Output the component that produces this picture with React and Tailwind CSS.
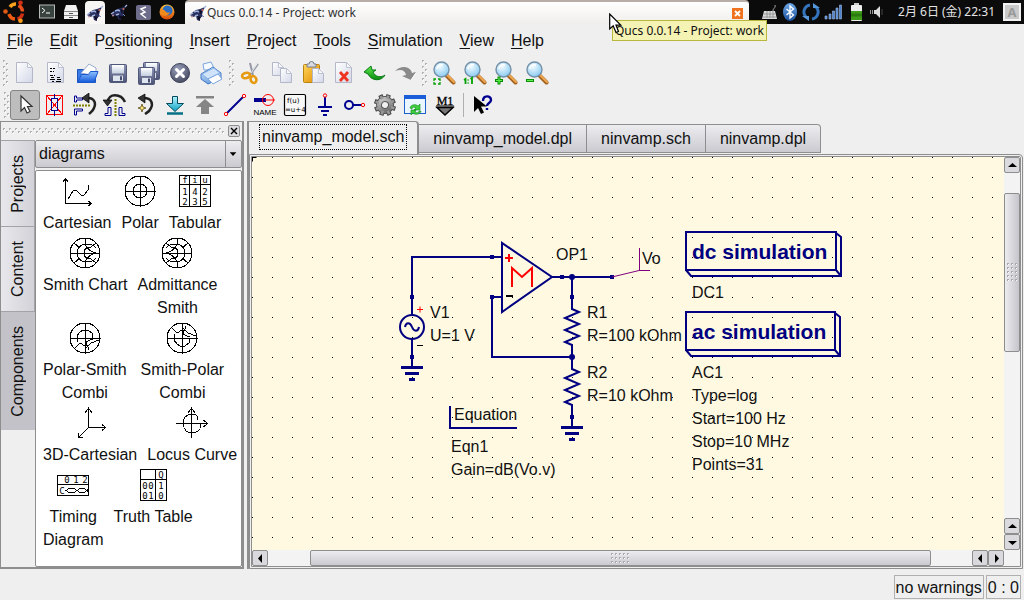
import React from "react";

/* ---------- shared gradients ---------- */
function Defs() {
  const g = (id, a, b, dir) => (
    <linearGradient id={id} x1="0" y1="0" x2={dir === "v" ? "0" : "1"} y2="1">
      <stop offset="0" stopColor={a} />
      <stop offset="1" stopColor={b} />
    </linearGradient>
  );
  return (
    <svg width="0" height="0" className="absolute" aria-hidden="true">
      <defs>
        {g("paper", "#ffffff", "#d3d8e8")}
        {g("folder", "#8fc4ff", "#1257d8", "v")}
        {g("disk", "#8c93b4", "#4d5374", "v")}
        {g("label", "#ffffff", "#c4cfdf", "v")}
        {g("gold", "#ffd65a", "#e08a00")}
        {g("teal", "#b6f4ff", "#0aa2c2", "v")}
        {g("green", "#5dec4a", "#0b8a12", "v")}
        {g("printer", "#e8f3ff", "#6da0e0", "v")}
        {g("metal", "#d6d6d6", "#5c5c5c")}
        {g("bt", "#6fa9e8", "#1a4f9c", "v")}
        {g("fox", "#ffc63a", "#d84a05", "v")}
        <radialGradient id="lens" cx="0.4" cy="0.3" r="0.8">
          <stop offset="0" stopColor="#f4fcff" />
          <stop offset="1" stopColor="#7cc4f0" />
        </radialGradient>
        <radialGradient id="stop" cx="0.4" cy="0.3" r="0.8">
          <stop offset="0" stopColor="#9aa0bb" />
          <stop offset="1" stopColor="#3d4258" />
        </radialGradient>
      </defs>
    </svg>
  );
}

function Icon({ children, size = 24, crisp }) {
  return (
    <svg
      width={size}
      height={size}
      viewBox="0 0 24 24"
      fill="none"
      aria-hidden="true"
      shapeRendering={crisp ? "crispEdges" : "auto"}
      className="shrink-0"
    >
      {children}
    </svg>
  );
}

/* ---------- toolbar icons ---------- */
const Page = ({ x = 3, y = 1, w = 17, h = 21 }) => (
  <g>
    <path
      d={`M${x + 0.5} ${y + 0.5}h${w - 6}l5 5v${h - 6}h-${w - 1}z`}
      fill="url(#paper)"
      stroke="#b3b7c8"
    />
    <path d={`M${x + w - 5.5} ${y + 0.5}v5h5z`} fill="#f8f9fc" stroke="#bfc3d1" />
  </g>
);
const NewDoc = () => <Icon><Page /></Icon>;
const TextDoc = () => (
  <Icon>
    <Page />
    <path d="M6 7.500h2m1 0h2M6 10.500h2m1 0h1M6 14.500h3m1 0h1M7 16.500h3m3 0h3M6 18.500h5m2 0h4M8 20.500h2m2 0h5" stroke="#000" shapeRendering="crispEdges" />
  </Icon>
);
const Open = () => (
  <Icon>
    <path d="M2.500 8.500h6l2 2h10v11h-18z" fill="#3b7be6" stroke="#1d54b8" />
    <path d="M6 12l8-9 7 4v8z" fill="#fff" stroke="#98aacb" />
    <path d="M2.500 21.500l4-8h7l2-3h7.500l-4 11z" fill="url(#folder)" stroke="#1a58cc" />
  </Icon>
);
const Disk = ({ x = 3, y = 3, s = 17 }) => (
  <g>
    <rect x={x + 0.5} y={y + 0.5} width={s} height={s + 1} rx="1" fill="url(#disk)" stroke="#50587a" />
    <rect x={x + 3} y={y + 1} width={s - 5} height={s * 0.5} fill="url(#label)" />
    <rect x={x + 4} y={y + s * 0.68} width={s - 7} height={s * 0.32} fill="#dfe5ef" />
    <rect x={x + s - 6} y={y + s * 0.72} width="2" height="4" fill="#474d6e" />
  </g>
);
const Save = () => <Icon><Disk /></Icon>;
const SaveAll = () => <Icon><Disk x={6} y={1} s={16} /><Disk x={1} y={6} s={16} /></Icon>;
const Close = () => (
  <Icon>
    <circle cx="12" cy="12" r="9.500" fill="url(#stop)" stroke="#3c4258" />
    <path d="M8.500 8.500l7 7m0-7l-7 7" stroke="#fff" strokeWidth="3" strokeLinecap="round" />
  </Icon>
);
const Print = () => (
  <Icon>
    <path d="M5 9L4 3l8-2 4 8z" fill="#f4faff" stroke="#7ba6df" />
    <path d="M2 13l12-7 8 6v5l-13 6-7-5z" fill="url(#printer)" stroke="#4379c4" />
    <path d="M3 13l12-6 6 5-12 6z" fill="#cfe3fa" stroke="#6c9fde" strokeWidth=".7" />
    <path d="M9 18l10-5 4 5-9 5z" fill="#fff" stroke="#7ba6df" />
  </Icon>
);
const Cut = () => (
  <Icon>
    <path d="M11 14L19 3M14 14L11 2" stroke="#9598a8" strokeWidth="2" />
    <path d="M12 12l6-9" stroke="#fff" strokeWidth=".8" />
    <ellipse cx="7" cy="14.500" rx="4" ry="2.600" stroke="#e59a10" strokeWidth="2.600" transform="rotate(-15 7 14.500)" />
    <ellipse cx="14.500" cy="18.500" rx="2.800" ry="3.500" stroke="#e59a10" strokeWidth="2.600" transform="rotate(-20 14.500 18.500)" />
  </Icon>
);
const Copy = () => <Icon><Page x={2} y={1} w={12} h={14} /><Page x={10} y={7} w={12} h={15} /></Icon>;
const Paste = () => (
  <Icon>
    <rect x="2.500" y="3.500" width="16" height="18" rx="1" fill="url(#gold)" stroke="#b98310" />
    <path d="M6 6V3h2a2.500 2.500 0 015 0h2v3z" fill="#d9dbe2" stroke="#777c8c" />
    <Page x={11} y={7} w={12} h={15} />
  </Icon>
);
const Delete = () => (
  <Icon>
    <Page />
    <path d="M8 11l8 9m0-9l-8 9" stroke="#f03320" strokeWidth="2.800" />
  </Icon>
);
const Undo = () => (
  <Icon>
    <path d="M1 11l7-6 1 4h4l-3 2c2 5 8 6 12 3-3 6-13 7-17-1z" fill="url(#green)" stroke="#087b15" />
  </Icon>
);
const Redo = () => (
  <Icon>
    <path d="M1 10c6-6 15-5 17 2l4-1-5 8-9-4 4-1c-1-5-5-6-11-4z" fill="#8a8a8a" />
    <path d="M17 19l5-7" stroke="#fff" />
  </Icon>
);
const Lens = ({ children }) => (
  <Icon>
    <path d="M14.500 14.500l7 7" stroke="#a36421" strokeWidth="4" strokeLinecap="round" />
    <path d="M15 14l7 7" stroke="#f0a850" strokeWidth="2" strokeLinecap="round" />
    <circle cx="9.500" cy="8.500" r="7.500" fill="url(#lens)" stroke="#7390a8" strokeWidth="1.400" />
    <path d="M5 8c0-3 3-5 6-4" stroke="#fff" strokeWidth="1.500" />
    {children}
  </Icon>
);
const ZoomFit = () => <Lens><path d="M2 20v-2h2m2 0h2v2m0 1v2H6m-2 0H2v-2" stroke="#00a000" strokeWidth="1.300" /></Lens>;
const ZoomOne = () => <Lens><path d="M1 19l1.500-1v5m5-5L9 17v6M5.200 18.500v1m0 2v1" stroke="#00a000" strokeWidth="1.800" /></Lens>;
const ZoomIn = () => <Lens><path d="M1 19.500h8m-4-4v8" stroke="#058a05" strokeWidth="3" /><path d="M2 19.500h6m-3-3v6" stroke="#5ff04a" strokeWidth="1.200" /></Lens>;
const ZoomOut = () => <Lens><path d="M1 19.500h8" stroke="#058a05" strokeWidth="3" /><path d="M2 19.500h6" stroke="#5ff04a" strokeWidth="1.200" /></Lens>;

const Arrow = () => (
  <Icon>
    <path d="M8 3v15l3.500-3.500L14 20l3-1.500-2.500-5H19z" fill="#fff" stroke="#333" strokeWidth="1.200" />
  </Icon>
);
const Deactivate = () => (
  <Icon crisp>
    <path d="M3.500 2.500h16v19h-16zM3.500 2.500l16 19m0-19l-16 19" stroke="#f00" />
    <path d="M11.500 1v5m0 12v5M8.500 5.500h6v12h-6z" stroke="#000090" />
  </Icon>
);
const MirrorX = () => (
  <Icon>
    <path d="M1.500 3v6h2V7h6V5h-6V3zM1.500 22v-6h8v2h-6v4z" stroke="#000090" />
    <path d="M0 12.500h18" stroke="#808000" strokeWidth="2" strokeDasharray="2 1" />
    <path d="M15 5c7 0 8 6 6 10-1 3-3 4-5 6" stroke="#222" strokeWidth="2.500" />
    <path d="M9 5l7-5v10z" fill="#333" stroke="#000" strokeWidth=".7" />
  </Icon>
);
const MirrorY = () => (
  <Icon>
    <path d="M2 22.500v-2h3v-6h3v8zM22 22.500v-2h-3v-6h-3v8z" stroke="#000090" />
    <path d="M12.500 6v18" stroke="#808000" strokeWidth="2" strokeDasharray="2 1" />
    <path d="M5 9c0-9 13-9 17 0" stroke="#222" strokeWidth="2.500" />
    <path d="M0 7h9l-4.500 6z" fill="#333" stroke="#000" strokeWidth=".7" />
  </Icon>
);
const Rotate = () => (
  <Icon>
    <path d="M11 5c8 0 9 6 7 10-1 3-3 4-6 6" stroke="#222" strokeWidth="2.500" />
    <path d="M5 5l7-4v9z" fill="#333" stroke="#000" strokeWidth=".7" />
    <path d="M9 11l1 3 3 1-3 1-1 3-1-3-3-1 3-1z" fill="#ffe680" stroke="#4a3b00" strokeWidth=".7" />
  </Icon>
);
const Into = () => (
  <Icon>
    <path d="M9.500 3.500h5v7h6l-8.500 8-8.500-8h6z" fill="url(#teal)" stroke="#034b5c" />
    <path d="M4 20.500h16" stroke="#067186" strokeWidth="2.500" />
  </Icon>
);
const PopOut = () => <Icon><path d="M3 3h18v2.500H3zM12 6l9 8h-5v7H8v-7H3z" fill="#858585" /></Icon>;
const Wire = () => (
  <Icon>
    <path d="M4 20L20 4" stroke="#000090" strokeWidth="2" />
    <circle cx="3" cy="21" r="1.700" stroke="red" /><circle cx="21" cy="3" r="1.700" stroke="red" />
  </Icon>
);
const WireLabel = () => (
  <Icon>
    <path d="M1 7h12" stroke="#000090" strokeWidth="4" /><path d="M12 7h10" stroke="red" />
    <circle cx="15" cy="7" r="5.500" stroke="red" />
    <text x="12" y="21.500" textAnchor="middle" fill="#000" className="font-['Liberation_Sans',sans-serif] text-[8px]">NAME</text>
  </Icon>
);
const Equation = () => (
  <Icon>
    <rect x="1.500" y="1.500" width="21" height="21" rx="1.500" fill="#f8f8f8" stroke="#000" strokeWidth="1.200" />
    <text x="4" y="10" fill="#000" className="font-['DejaVu_Sans',sans-serif] text-[7px]">f(u)</text>
    <text x="2" y="19" fill="#000" className="font-['DejaVu_Sans',sans-serif] text-[7px]">=u+4</text>
  </Icon>
);
const Ground = () => (
  <Icon>
    <path d="M12 4v10M5 14h14M8 18h8M10 22h4" stroke="#000090" strokeWidth="2" /><circle cx="12" cy="2.500" r="1.700" stroke="red" />
  </Icon>
);
const Port = () => (
  <Icon>
    <circle cx="6" cy="12" r="4" stroke="#000090" strokeWidth="2" /><path d="M10 12h8" stroke="#000090" strokeWidth="2" /><circle cx="20" cy="12" r="1.700" stroke="red" />
  </Icon>
);
const Gear = () => (
  <Icon>
    <g transform="rotate(20 12 12)">
      <path d="M12 1v22M1 12h22M4.200 4.200l15.600 15.600M19.800 4.200L4.200 19.800" stroke="#4c4c4c" strokeWidth="4.500" />
      <circle cx="12" cy="12" r="8.500" fill="url(#metal)" stroke="#555" />
      <path d="M12 2v20M2 12h20M5 5l14 14M19 5L5 19" stroke="#9a9a9a" strokeWidth="2.500" />
      <circle cx="12" cy="12" r="6.500" fill="url(#metal)" />
      <circle cx="12" cy="12" r="3.500" fill="#efefef" stroke="#555" />
    </g>
  </Icon>
);
const ViewData = () => (
  <Icon>
    <rect x="1.500" y="2.500" width="21" height="18" fill="#e9f6ff" stroke="#1c62cf" /><path d="M1 4h22" stroke="#1a5fd8" strokeWidth="4" />
    <path d="M7 15c1-4 6-4 8-2l2-2v6h-6l2-2c-2-1-4-1-4 1zM18 18c-1 4-6 4-8 2l-2 2v-5h5l-1 2c2 1 4 1 4-1z" fill="#3fd03f" stroke="#0b8516" strokeWidth=".6" />
  </Icon>
);
const Marker = () => (
  <Icon>
    <text x="12" y="12" textAnchor="middle" fill="#000" stroke="#000" strokeWidth=".3" className="font-['Liberation_Serif',serif] text-[12px]">M1</text>
    <path d="M3 13h18" stroke="#000" /><path d="M4 14.500h16l-8 7.500z" fill="#777" stroke="#000" strokeWidth="1.500" />
  </Icon>
);
const WhatsThis = () => (
  <Icon>
    <path d="M4 3v16l4-4 3 6 3-1.500-3-6h6z" fill="#000" />
    <path d="M13 8c0-6 8-6 8-1 0 3-4 3-4 6m0 2v2" stroke="#000090" strokeWidth="2.400" />
  </Icon>
);

/* ---------- diagram icons, 32 px ---------- */
const D = ({ children }) => (
  <svg width="32" height="32" viewBox="0 0 32 32" fill="none" stroke="#000" shapeRendering="crispEdges" aria-hidden="true">{children}</svg>
);
const tiny = "font-['DejaVu_Sans_Mono',monospace] text-[9px]";
const Glyphs = ({ items }) => items.map(([t, x, y]) => (
  <text key={`${x}-${y}`} x={x} y={y} textAnchor="middle" fill="#000" stroke="none" className={tiny}>{t}</text>
));
const Cartesian = () => <D><path d="M4.500 29V3.500M2 7l2.500-3.500L7 7M4 28.500h26M27 26l3.500 2.500L27 31M7 24l5-8 3-1 5 5 3 0 4-5 1-5" /></D>;
const cross = "M16 .5v31M.5 16h31";
const Polar = () => <D><circle cx="16" cy="16" r="15" /><circle cx="16" cy="16" r="7" /><path d={cross} /></D>;
const Tabular = () => (
  <D><path d="M.5.500h31v31H.5zM.5 9.500h31M10.500.500v31M21.500.500v31" />
    <Glyphs items={[["f", 6, 8], ["i", 16, 8], ["u", 26, 8], ["1", 6, 20], ["4", 16, 20], ["2", 26, 20], ["2", 6, 30], ["3", 16, 30], ["5", 26, 30]]} /></D>
);
const smith = (
  <g>
    <circle cx="16" cy="16" r="15" />
    <path d="M1 16h30M27 16c-5-1-10-5-11-9V1M27 16c-5 1-10 5-11 9v6M5 6l6 5M5 26l6-5M27 6l-5 4M27 26l-5-4" />
    <path d="M8 16c0-5 4-9 9-9s8 1 10 4M8 16c0 5 4 9 9 9s8-1 10-4M15 16c0-4 2-6 7-6M15 16c0 4 2 6 7 6" />
  </g>
);
const Smith = () => <D>{smith}</D>;
const Admittance = () => <D><g transform="matrix(-1 0 0 1 32 0)">{smith}</g></D>;
const PolarSmith = () => (
  <D><circle cx="16" cy="16" r="15" /><path d={cross} />
    <path d="M8 20v-6l3-4 3-2h5l4 3 1 5M5 27l6-6 5 3 4-1M16 20l8-3M20 28l-3-8M30 18l-8 3-5 5" /></D>
);
const SmithPolar = () => (
  <D><circle cx="16" cy="16" r="15" /><path d={cross} />
    <path d="M8 12v6l3 4 3 2h5l4-3 1-5M5 5l6 6 5-3 4 1M16 12l8 3M20 4l-3 8M30 14l-8-3-5-5" /></D>
);
const Cart3d = () => <D><path d="M14.500 20V1.500M11 6l3.500-5L18 6M14 20.500h18M28 17.500l3.500 3-3.500 3M14.500 20.500l-10 10M4.500 26v4.500H9" /></D>;
const Locus = () => <D><path d="M15.500 31V1M12 6l3.500-5L19 6M0 16.500h32M27 13l5 3.500-5 3.500" /><path d="M21 13c2-6-4-7-9-5-8 3-6 18 4 18 6 0 9-4 9-9" /></D>;
const Timing = () => (
  <D><path d="M.5 6.500h31v20H.5zM.5 15.500h31M9 21.500l3-2h5l3 2-3 2h-5zM20 21.500l3-2h4l3 2-3 2h-4zM32 19l-2 2.500 2 2.500" />
    <Glyphs items={[["0", 10, 14], ["1", 19, 14], ["2", 28, 14], ["C", 5, 25]]} /></D>
);
const Truth = () => (
  <D><path d="M3.500.500h26v31h-26zM3.500 10.500h26M18.500.500v31" />
    <Glyphs items={[["Q", 24, 9], ["0", 8, 20], ["0", 14, 20], ["1", 24, 20], ["0", 8, 30], ["1", 14, 30], ["0", 24, 30]]} /></D>
);

const diagramRows = [
  { gap: "gap-[10px]", items: [[Cartesian, ["Cartesian"]], [Polar, ["Polar"]], [Tabular, ["Tabular"]]] },
  { gap: "gap-[10px]", items: [[Smith, ["Smith Chart"]], [Admittance, ["Admittance", "Smith"]]] },
  { gap: "gap-[14px]", items: [[PolarSmith, ["Polar-Smith", "Combi"]], [SmithPolar, ["Smith-Polar", "Combi"]]] },
  { gap: "gap-[10px]", items: [[Cart3d, ["3D-Cartesian"]], [Locus, ["Locus Curve"]]] },
  { gap: "gap-[10px]", items: [[Timing, ["Timing", "Diagram"]], [Truth, ["Truth Table"]]] },
];

/* ---------- desktop panel ---------- */
const QucsLogo = () => (
  <svg width="18" height="18" viewBox="0 0 18 18" className="shrink-0" aria-hidden="true">
    <path d="M1 11l3-3 3-2 4-1 5-2-2 4-1 4 1 1-3 2v3l-3-1-1-4-3 1z" fill="#2a3160" />
    <path d="M1 11l3-2M5 8l3-1 2 1M6 12l3-1M15 4l2-2" stroke="#9fb2dc" strokeWidth="1.400" fill="none" />
    <path d="M10 6l3 1-1 4zM8 12l2 5 2-4z" fill="#0c0d24" />
    <circle cx="13.500" cy="6" r="1" fill="#d06a5a" /><circle cx="3" cy="12.500" r="1" fill="#b98fa0" />
    <path d="M13 11l2 2" stroke="#7f8bb8" />
  </svg>
);

function Panel() {
  const launcher = "grid w-6 place-items-center";
  return (
    <header className="relative flex h-6 shrink-0 items-center bg-[#0b0b0b] font-['Noto_Sans','Noto_Sans_CJK_JP',sans-serif] text-[11px] leading-4">
      <button aria-label="Main menu" className="grid w-[27px] place-items-center">
        <svg width="24" height="24" viewBox="0 0 24 24" fill="none" aria-hidden="true">
          <path d="M8 7a7 7 0 016-3" stroke="#f7a11a" strokeWidth="3.500" />
          <path d="M16.500 5.500a7 7 0 014 6" stroke="#e8501c" strokeWidth="3.500" />
          <path d="M20.500 13.500a7 7 0 01-5 5.500" stroke="#d33116" strokeWidth="3.500" />
          <path d="M13 19a7 7 0 01-6-5" stroke="#ee5a10" strokeWidth="3.500" />
          <circle cx="3.500" cy="11.500" r="2.300" fill="#e05a14" /><circle cx="18.500" cy="2.800" r="2.300" fill="#d33116" /><circle cx="18.500" cy="20.800" r="2.300" fill="#f59a18" />
        </svg>
      </button>
      <div className="ml-2 flex h-full items-stretch">
        <button aria-label="Terminal" className={launcher}>
          <svg width="16" height="16" viewBox="0 0 16 16" aria-hidden="true"><rect x=".5" y="1" width="15" height="13" fill="#38423e" stroke="#b8bcb8" /><path d="M3 4l3 2.500L3 9m4 0h4" stroke="#fff" fill="none" /></svg>
        </button>
        <button aria-label="Files" className={launcher}>
          <svg width="16" height="16" viewBox="0 0 16 16" aria-hidden="true"><path d="M3 1h10l2 6v8H1V7z" fill="#f2f2f2" /><path d="M1 7.500h14M1 11.500h14" stroke="#888" /><path d="M6 9.500h4M6 13.500h4" stroke="#555" /></svg>
        </button>
        <button aria-label="Qucs" className="mt-px ml-[2px] grid w-5 place-items-center rounded-t bg-[#f7f6f4]"><QucsLogo /></button>
        <button aria-label="Qucs second window" className="grid w-7 place-items-center"><QucsLogo /></button>
        <button aria-label="Editor" className="grid w-5 place-items-center">
          <svg width="15" height="15" viewBox="0 0 15 15" aria-hidden="true"><rect width="15" height="15" rx="2" fill="#6d6c8a" /><path d="M10 2L5 4l4 3-4 2 5 4" stroke="#fff" strokeWidth="1.500" fill="none" /></svg>
        </button>
        <button aria-label="Firefox" className="grid w-7 place-items-center">
          <svg width="16" height="16" viewBox="0 0 16 16" aria-hidden="true"><circle cx="8" cy="8" r="7.500" fill="url(#fox)" /><circle cx="8.500" cy="6.500" r="5" fill="#2b6cc4" /><path d="M1 5c3 0 5 1 6 3 1 1 3 1 4 0-1 4-6 5-10 2z" fill="#f08a1c" /></svg>
        </button>
      </div>
      <div className="ml-[4px] flex h-6 min-w-0 flex-1 items-center justify-between rounded-t border-t-2 border-[#b9aea7] bg-linear-to-b from-white to-[#efeeec] pr-[6px] pl-1 text-[#333]">
        <span className="flex items-center"><QucsLogo /><span className="truncate text-[12px]">Qucs 0.0.14 - Project: work</span></span>
        <button aria-label="Close window" className="grid size-[11px] place-items-center bg-[#f0721e]">
          <svg width="9" height="9" viewBox="0 0 9 9" aria-hidden="true"><path d="M2 2l5 5m0-5L2 7" stroke="#fff" strokeWidth="1.800" /></svg>
        </button>
      </div>
      <div className="flex shrink-0 items-center gap-1 pr-[3px] pl-3 text-[#e4e4e4]">
        <svg width="17" height="16" viewBox="0 0 17 16" aria-hidden="true"><path d="M3 7h11l2 8H1z" fill="#d9d9d9" /><path d="M3 10h11M2 13h13M6 7v7m3-7v7m3-7v7" stroke="#888" strokeWidth=".8" /><path d="M12 7c0-4 3-2 2-6" stroke="#aaa" fill="none" /></svg>
        <svg width="16" height="20" viewBox="0 0 16 20" aria-hidden="true"><ellipse cx="8" cy="10" rx="7" ry="9" fill="url(#bt)" /><path d="M4.500 7l7 6L8 16V4l3.500 3-7 6" stroke="#fff" strokeWidth="1.300" fill="none" /></svg>
        <svg width="18" height="18" viewBox="0 0 18 18" fill="none" aria-hidden="true"><path d="M8 2c-6 1-8 8-4 12M10 16c6-1 8-8 4-12" stroke="#3474bd" strokeWidth="3" /><path d="M0 13h7v5zM18 5h-7V0z" fill="#5595d8" /></svg>
        <svg width="18" height="16" viewBox="0 0 18 16" fill="#4d83cf" stroke="#9dbce8" strokeWidth=".6" aria-hidden="true"><path d="M1 12h2v3H1zM5 10h2v5H5zM8.500 7h2v8h-2zM12 4h2v11h-2zM15.500 1h2v14h-2z" /></svg>
        <svg width="20" height="20" viewBox="0 0 20 20" aria-hidden="true"><rect x="8" y="1" width="5" height="3" fill="#ccc" /><rect x="5" y="3" width="11" height="16" rx="1" fill="#eee" /><rect x="5" y="9" width="11" height="9" fill="#3f9c1a" /><path d="M5 13h11" stroke="#2c7d10" strokeWidth="3" /></svg>
        <svg width="18" height="16" viewBox="0 0 18 16" aria-hidden="true"><path d="M4 6h2l4-4v12l-4-4H4z" fill="#ddd" /><path d="M0.500 6v4m2-4v4" stroke="#999" /><path d="M12 5v6" stroke="#444" /></svg>
        <time className="ml-[6px] text-[12px] whitespace-nowrap">2月 6日 (金) 22:31</time>
        <button aria-label="Input method" className="ml-1 grid size-[18px] place-items-center border-2 border-[#f2f2f2] bg-[#c9c9c9] text-[13px] leading-3 font-bold text-[#999]">A</button>
      </div>
    </header>
  );
}

/* ---------- menu and toolbars ---------- */
const menus = [["", "F", "ile"], ["", "E", "dit"], ["P", "o", "sitioning"], ["", "I", "nsert"], ["", "P", "roject"], ["", "T", "ools"], ["", "S", "imulation"], ["", "V", "iew"], ["", "H", "elp"]];

const Grip = () => (
  <svg width="6" height="26" className="shrink-0" aria-hidden="true">
    <defs>
      <pattern id="grip" width="6" height="6" patternUnits="userSpaceOnUse">
        <path d="M0 0h2v1h-1v1h-1zM3 3h2v1h-1v1h-1z" fill="#b0b0b0" /><path d="M2 1v2h-1v-1zM5 4v2h-1v-1z" fill="#fff" />
      </pattern>
    </defs>
    <rect width="6" height="26" fill="url(#grip)" />
  </svg>
);
const fileTools = [["New", NewDoc], ["New text", TextDoc], ["Open", Open], ["Save", Save], ["Save all", SaveAll], ["Close", Close], ["Print", Print]];
const editTools = [["Cut", Cut], ["Copy", Copy], ["Paste", Paste], ["Delete", Delete], ["Undo", Undo], ["Redo", Redo]];
const viewTools = [["View all", ZoomFit], ["View 1:1", ZoomOne], ["Zoom in", ZoomIn], ["Zoom out", ZoomOut]];
const workTools = [["Select", Arrow], ["Deactivate", Deactivate], ["Mirror about X axis", MirrorX], ["Mirror about Y axis", MirrorY], ["Rotate", Rotate], ["Go into subcircuit", Into], ["Pop out", PopOut], ["Wire", Wire], ["Wire label", WireLabel], ["Insert equation", Equation], ["Ground", Ground], ["Port", Port], ["Simulate", Gear], ["View data display", ViewData], ["Set marker", Marker]];

const Tools = ({ items, wide }) => (
  <div className="flex">
    {items.map(([name, I]) => (
      <button
        key={name}
        aria-label={name}
        title={name}
        className={`grid h-[30px] place-items-center ${wide ? "w-[31px]" : "w-[30px]"} ${name === "Select" ? "rounded-[3px] border border-[#858585] bg-[#bdbdbd]" : ""}`}
      >
        <I />
      </button>
    ))}
  </div>
);

/* ---------- component dock ---------- */
const raised = "bg-linear-to-b from-[#ededf0] to-[#cacad0]";

function Dock() {
  const side = [["Projects", "h-[86px]"], ["Content", "h-[85px]"], ["Components", "h-[119px]"]];
  return (
    <aside className="flex w-[244px] shrink-0 flex-col border border-r-2 border-b-2 border-[#8e8e8e]">
      <div className="flex h-[18px] shrink-0 items-center gap-1 px-[2px]">
        <svg height="6" className="min-w-0 flex-1" aria-hidden="true">
          <defs>
            <pattern id="gripH" width="6" height="6" patternUnits="userSpaceOnUse"><path d="M0 0h2v1h-1v1h-1zM3 3h2v1h-1v1h-1z" fill="#b0b0b0" /><path d="M2 1v2h-1v-1zM5 4v2h-1v-1z" fill="#fff" /></pattern>
          </defs>
          <rect width="100%" height="6" fill="url(#gripH)" />
        </svg>
        <button aria-label="Close dock" className="grid size-3 place-items-center rounded-[2px] border border-[#8e8e8e] bg-[#dcdce0]">
          <svg width="8" height="8" viewBox="0 0 8 8" aria-hidden="true"><path d="M1 1l6 6m0-6L1 7" stroke="#000" strokeWidth="1.400" /></svg>
        </button>
      </div>
      <div className="flex min-h-0 flex-1">
        <div role="tablist" aria-orientation="vertical" className="flex w-[34px] shrink-0 flex-col">
          {side.map(([name, h], i) => (
            <button key={name} role="tab" aria-selected={i === 2} className={`grid place-items-center border-t border-[#a4a4a8] ${h} ${i === 2 ? "bg-[#c2c2c8]" : "border-r bg-linear-to-r from-[#e8e8ec] to-[#d2d2d8]"}`}>
              <span className="rotate-180 leading-5 [writing-mode:vertical-rl]">{name}</span>
            </button>
          ))}
        </div>
        <div className="flex min-w-0 flex-1 flex-col gap-[2px]">
          <div className={`flex h-7 shrink-0 rounded-[2px] border border-[#8e8e8e] ${raised}`}>
            <select aria-label="Component category" className="min-w-0 flex-1 appearance-none bg-transparent pl-[3px] outline-none" defaultValue="diagrams">
              <option>diagrams</option>
            </select>
            <svg width="16" height="26" viewBox="0 0 16 26" className="pointer-events-none shrink-0 border-l border-[#8e8e8e]" aria-hidden="true"><path d="M4 11h7l-3.500 4z" fill="#000" /></svg>
          </div>
          <div className="min-h-0 flex-1 overflow-hidden rounded-[2px] border border-[#8e8e8e] bg-white pt-1 pl-[7px]">
            {diagramRows.map((row, r) => (
              <div key={r} className={`flex items-start ${row.gap}`}>
                {row.items.map(([I, lines]) => (
                  <button key={lines[0]} className="flex flex-col items-center pb-[3px] leading-[23px] whitespace-nowrap">
                    <span className="mb-1 block h-8"><I /></span>
                    {lines.map((l) => <span key={l}>{l}</span>)}
                  </button>
                ))}
              </div>
            ))}
          </div>
        </div>
      </div>
    </aside>
  );
}

/* ---------- schematic ---------- */
const Resistor = ({ y }) => <path d={`M572 ${y}v12l7 3-14 6 14 6-14 6 14 6-14 6 7 3v12`} />;
const Earth = ({ x, y }) => (
  <g strokeWidth="3"><path d={`M${x - 11} ${y + 0.5}h22M${x - 7} ${y + 6.5}h14M${x - 3} ${y + 12.5}h6`} /></g>
);
const SimBox = ({ y, w, label }) => (
  <g>
    <path d={`M686 ${y}h${w}v38h-${w}zM${686 + w} ${y + 1}l5 4v39h-${w}l-5-6M${686 + w} ${y + 38}l5 6`} />
    <text x="692" y={y + 27} fill="#000080" stroke="none" className="text-[21px] font-bold">{label}</text>
  </g>
);
const labels = [
  ["OP1", 556, 260], ["Vo", 642, 264], ["V1", 430, 318], ["U=1 V", 430, 341], ["R1", 587, 318], ["R=100 kOhm", 587, 341],
  ["R2", 587, 378], ["R=10 kOhm", 587, 401], ["Equation", 454, 420], ["Eqn1", 451, 452], ["Gain=dB(Vo.v)", 451, 475],
  ["DC1", 692, 298], ["AC1", 692, 378], ["Type=log", 692, 401], ["Start=100 Hz", 692, 424], ["Stop=10 MHz", 692, 447], ["Points=31", 692, 470],
];
const nodes = [[492, 257], [412, 297], [562, 277], [612, 277], [572, 297], [492, 297], [412, 357], [572, 417]];

function Schematic() {
  return (
    <svg width="100%" height="100%" className="block bg-[#fff9e1]" role="img" aria-label="Non-inverting amplifier schematic">
      <defs>
        <pattern id="dots" width="20" height="20" patternUnits="userSpaceOnUse"><rect width="1" height="1" fill="#000" /></pattern>
      </defs>
      <rect width="100%" height="100%" fill="url(#dots)" />
      <path d="M.5 4.500v-4h4" stroke="#000" fill="none" />
      <g transform="translate(-252 -157)" fill="none" stroke="#000080" strokeWidth="2">
        <path d="M412 315v-58h90M502 297h-10v60h80M552 277h60M572 277v20M412 339v28M572 417v10" />
        <path d="M502 243v69l50-35z" />
        <Resistor y={297} /><Resistor y={357} />
        <Earth x={412} y={367} /><Earth x={572} y={427} />
        <circle cx="412" cy="327" r="12" />
        <path d="M405 327c1-5 5-5 7 0s6 5 7 0" />
        <path d="M450 406v22h67" />
        <g fill="#000080" stroke="none">
          {nodes.map(([x, y]) => <rect key={`${x}-${y}`} x={x - 2} y={y - 2} width="4" height="4" />)}
          <circle cx="572" cy="277" r="3" /><circle cx="572" cy="357" r="3" />
        </g>
        <path d="M505 258h8m-4-4v8M512 287v-19l10 9 10-9v19" stroke="#f00" />
        <path d="M417 309.500h6m-3-3v6" stroke="#f00" strokeWidth="1" />
        <path d="M506 296h7" stroke="#000" />
        <path d="M417 345.500h6" stroke="#000" strokeWidth="1" />
        <path d="M612 277l27-6.500h11M639.500 248v23" stroke="#800080" strokeWidth="1" />
        <SimBox y={232} w={150} label="dc simulation" />
        <SimBox y={312} w={149} label="ac simulation" />
        <g fill="#111" stroke="none">
          {labels.map(([t, x, y]) => <text key={t} x={x} y={y}>{t}</text>)}
        </g>
      </g>
    </svg>
  );
}

const arrows = { up: "M2 8h9L6.500 4z", down: "M2 5h9L6.500 9z", left: "M8 2v9L4 6.500z", right: "M5 2v9l4-4.500z" };
const ScrollButton = ({ dir }) => (
  <button aria-label={`Scroll ${dir}`} className="grid size-4 shrink-0 place-items-center rounded-[2px] border border-[#8e8e8e] bg-[#d9d9de]">
    <svg width="13" height="13" viewBox="0 0 13 13" aria-hidden="true"><path d={arrows[dir]} fill="#000" /></svg>
  </button>
);
const Knurl = ({ w, h }) => (
  <svg width={w} height={h} aria-hidden="true">
    <defs><pattern id={`k${w}`} width="4" height="4" patternUnits="userSpaceOnUse"><path d="M0 0h2v1h-1v1h-1z" fill="#a8a8ae" /><path d="M1 1h1v1h-1z" fill="#fff" /></pattern></defs>
    <rect width={w} height={h} fill={`url(#k${w})`} />
  </svg>
);

const docs = ["ninvamp_model.sch", "ninvamp_model.dpl", "ninvamp.sch", "ninvamp.dpl"];

function Workspace() {
  return (
    <main className="ml-[3px] flex min-w-0 flex-1 flex-col border-l-2 border-[#8e8e8e]">
      <div role="tablist" className="flex h-[33px] shrink-0 items-start">
        {docs.map((d, i) =>
          i === 0 ? (
            <button key={d} role="tab" aria-selected="true" className="h-[33px] rounded-tr border-t border-r-2 border-[#8e8e8e] px-[10px] pb-[3px]">
              <span className="block h-[26px] border border-dotted border-black px-[2px] leading-6">{d}</span>
            </button>
          ) : (
            <button key={d} role="tab" aria-selected="false" className={`mt-[3px] h-[29px] border-y border-r border-[#8e8e8e] px-[14px] ${raised} ${i === 3 ? "rounded-tr" : ""}`}>{d}</button>
          )
        )}
      </div>
      <div className="flex min-h-0 flex-1 flex-col rounded-tr border-3 border-double border-[#8e8e8e]">
        <div className="flex min-h-0 flex-1">
          <div className="min-w-0 flex-1"><Schematic /></div>
          <div className="flex w-4 shrink-0 flex-col bg-[#f3f3f3]">
            <ScrollButton dir="up" />
            <div className="flex min-h-0 flex-1 flex-col">
              <div className="flex-[20]" />
              <div className="grid flex-[158] place-items-center rounded-[2px] border border-[#8e8e8e] bg-linear-to-r from-[#ededf0] to-[#c4c4ca]"><Knurl w={11} h={19} /></div>
              <div className="flex-[167]" />
            </div>
            <ScrollButton dir="up" /><ScrollButton dir="down" />
          </div>
        </div>
        <div className="flex h-4 shrink-0 bg-[#f3f3f3] pr-4">
          <ScrollButton dir="left" />
          <div className="flex h-4 min-w-0 flex-1">
            <div className="flex-[42]" />
            <div className={`grid flex-[621] place-items-center rounded-[2px] border border-[#8e8e8e] ${raised}`}><Knurl w={19} h={11} /></div>
            <div className="flex-[41]" />
          </div>
          <ScrollButton dir="left" /><ScrollButton dir="right" />
        </div>
      </div>
    </main>
  );
}

export default function App() {
  return (
    <div className="flex h-screen flex-col overflow-hidden bg-[#efefef] font-['Liberation_Sans',Arial,sans-serif] text-[16px] leading-6 text-[#111]">
      <Defs />
      <Panel />
      <nav className="flex h-[33px] shrink-0 items-center gap-[17px] pl-[7px]">
        {menus.map(([a, k, b]) => (
          <button key={a + k + b}>{a}<span className="underline underline-offset-2">{k}</span>{b}</button>
        ))}
      </nav>
      <div role="toolbar" aria-label="Standard" className="flex h-8 shrink-0 items-center pl-[3px]">
        <Grip /><Tools items={fileTools} wide />
        <div className="flex items-center pl-[3px]"><Grip /><Tools items={editTools} wide /></div>
        <div className="flex items-center pl-px"><Grip /><Tools items={viewTools} wide /></div>
      </div>
      <div role="toolbar" aria-label="Work" className="flex h-8 shrink-0 items-center pl-1">
        <Grip /><Tools items={workTools} />
        <div className="mx-[3px] h-6 border-l border-[#b0b0b0]" />
        <Tools items={[["What's this?", WhatsThis]]} />
      </div>
      <div className="flex min-h-0 flex-1 pr-px"><Dock /><Workspace /></div>
      <footer className="flex h-[31px] shrink-0 items-center justify-end gap-[2px] pt-[4px] pr-[3px]">
        <span className="h-6 border border-[#b0b0b0] px-px">no warnings</span>
        <span className="h-6 border border-[#b0b0b0] px-px">0 : 0</span>
      </footer>
      <div role="tooltip" className="absolute top-5 left-[612px] h-[21px] border border-[#bab83c] bg-[#f5f3b4] px-[2px] font-['Noto_Sans',sans-serif] text-[12px] leading-[19px] whitespace-nowrap">
        Qucs 0.0.14 - Project: work
      </div>
      <svg width="13" height="21" viewBox="0 0 13 21" className="absolute top-[13px] left-[609px]" aria-hidden="true">
        <path d="M.7 1v15l3.500-3.200L7 19.500l2.500-1L7 12.200h4.800z" fill="#fff" stroke="#000" strokeWidth="1.200" />
      </svg>
    </div>
  );
}
